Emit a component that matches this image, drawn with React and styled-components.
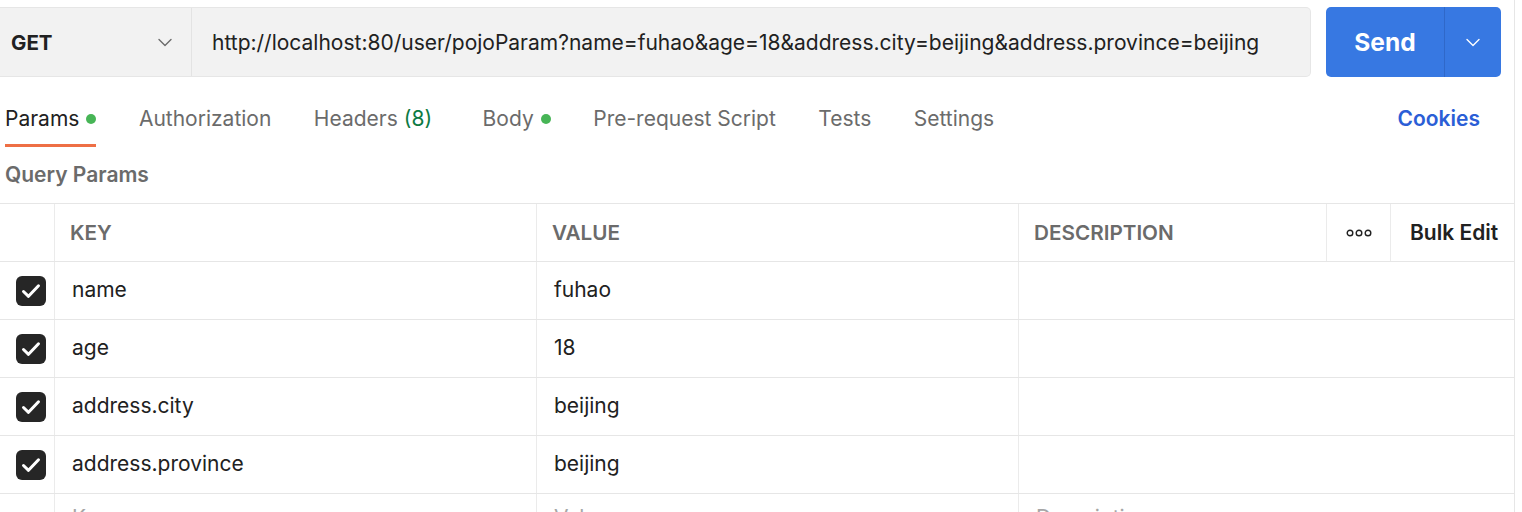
import React from "react";
import styled, { createGlobalStyle } from "styled-components";

const GlobalStyle = createGlobalStyle`
  body {
    margin: 0;
    background: #ffffff;
    font-family: Inter, "Noto Sans", sans-serif;
    color: #212121;
  }
`;

const params = [
  { key: "name", value: "fuhao" },
  { key: "age", value: "18" },
  { key: "address.city", value: "beijing" },
  { key: "address.province", value: "beijing" },
];

const tabs = [
  { label: "Params", dot: true, active: true },
  { label: "Authorization" },
  { label: "Headers", count: "(8)" },
  { label: "Body", dot: true },
  { label: "Pre-request Script" },
  { label: "Tests" },
  { label: "Settings" },
];

const Chevron = ({ color, size = 16 }) => (
  <svg width={size} height={size} viewBox="0 0 16 16" fill="none">
    <path d="M2 5.5l6 6 6-6" stroke={color} strokeWidth="1.4" strokeLinecap="round" strokeLinejoin="round" />
  </svg>
);

const CheckBox = () => (
  <Box>
    <svg width="24" height="24" viewBox="0 0 24 24" fill="none">
      <path d="M4.5 12.5l5 4.8L19.5 6.8" stroke="#fff" strokeWidth="3" strokeLinecap="round" strokeLinejoin="round" />
    </svg>
  </Box>
);

const App = () => {
  return (
    <Page>
      <GlobalStyle />
      <TopBar>
        <UrlGroup>
          <Method>
            <span>GET</span>
            <Chevron color="#6b6b6b" />
          </Method>
          <Url>http://localhost:80/user/pojoParam?name=fuhao&age=18&address.city=beijing&address.province=beijing</Url>
        </UrlGroup>
        <SendButton>
          <SendLabel>Send</SendLabel>
          <SendMenu>
            <Chevron color="#ffffff" />
          </SendMenu>
        </SendButton>
      </TopBar>

      <TabRow>
        <Tabs>
          {tabs.map((t) => (
            <Tab key={t.label} active={t.active}>
              {t.label}
              {t.count && <Count>{t.count}</Count>}
              {t.dot && <Dot />}
            </Tab>
          ))}
        </Tabs>
        <Cookies>Cookies</Cookies>
      </TabRow>

      <SectionTitle>Query Params</SectionTitle>

      <Table>
        <HeadRow>
          <CheckCell />
          <HeadCell>KEY</HeadCell>
          <HeadCell>VALUE</HeadCell>
          <HeadCell>DESCRIPTION</HeadCell>
          <MoreCell>
            <svg width="26" height="8" viewBox="0 0 26 8" fill="none">
              <circle cx="4" cy="4" r="2.8" stroke="#212121" strokeWidth="1.4" />
              <circle cx="13" cy="4" r="2.8" stroke="#212121" strokeWidth="1.4" />
              <circle cx="22" cy="4" r="2.8" stroke="#212121" strokeWidth="1.4" />
            </svg>
          </MoreCell>
          <BulkCell>Bulk Edit</BulkCell>
        </HeadRow>
        {params.map((p) => (
          <Row key={p.key}>
            <CheckCell>
              <CheckBox />
            </CheckCell>
            <Cell>{p.key}</Cell>
            <Cell>{p.value}</Cell>
            <Cell wide />
          </Row>
        ))}
        <Row>
          <CheckCell />
          <Cell placeholder>Key</Cell>
          <Cell placeholder>Value</Cell>
          <Cell wide placeholder>Description</Cell>
        </Row>
      </Table>
    </Page>
  );
};

const Page = styled.div`
  width: 1514px;
  height: 512px;
  overflow: hidden;
  border-right: 1px solid #e6e6e6;
`;

const TopBar = styled.div`
  display: flex;
  align-items: stretch;
  gap: 15px;
  padding-top: 7px;
  height: 70px;
`;

const UrlGroup = styled.div`
  width: 1310px;
  display: flex;
  background: #f2f2f2;
  border: 1px solid #e6e6e6;
  border-left: none;
  border-radius: 0 5px 5px 0;
`;

const Method = styled.div`
  width: 192px;
  box-sizing: border-box;
  display: flex;
  align-items: center;
  justify-content: space-between;
  padding: 0 18px 0 11px;
  border-right: 1px solid #e3e3e3;
  font-size: 20.5px;
  font-weight: 700;
  color: #212121;
`;

const Url = styled.div`
  display: flex;
  align-items: center;
  padding-left: 20px;
  font-size: 21px;
  color: #212121;
  white-space: nowrap;
`;

const SendButton = styled.div`
  width: 175px;
  display: flex;
  background: #3778e2;
  border-radius: 5px;
  color: #ffffff;
`;

const SendLabel = styled.div`
  flex: 1;
  display: flex;
  align-items: center;
  justify-content: center;
  font-size: 24.5px;
  font-weight: 700;
  border-right: 1px solid #2f68c9;
`;

const SendMenu = styled.div`
  width: 56px;
  display: flex;
  align-items: center;
  justify-content: center;
`;

const TabRow = styled.div`
  display: flex;
  align-items: flex-start;
  justify-content: space-between;
  height: 70px;
  padding: 0 34px 0 5px;
`;

const Tabs = styled.div`
  display: flex;
  gap: 42.5px;
  height: 100%;
`;

const Tab = styled.div`
  display: flex;
  align-items: center;
  gap: 7px;
  height: 100%;
  box-sizing: border-box;
  padding-top: 16px;
  font-size: 21px;
  color: ${(p) => (p.active ? "#212121" : "#6b6b6b")};
  border-bottom: 3px solid ${(p) => (p.active ? "#ee6f45" : "transparent")};
`;

const Count = styled.span`
  color: #0d7a43;
  margin-left: -1px;
  margin-right: 8px;
`;

const Dot = styled.span`
  width: 10px;
  height: 10px;
  border-radius: 50%;
  background: #47b556;
`;

const Cookies = styled.div`
  height: 100%;
  display: flex;
  align-items: center;
  padding-top: 13px;
  box-sizing: border-box;
  font-size: 21px;
  font-weight: 600;
  color: #2b5ed6;
`;

const SectionTitle = styled.div`
  height: 56px;
  box-sizing: border-box;
  padding: 0 0 2px 5px;
  display: flex;
  align-items: center;
  font-size: 21px;
  font-weight: 600;
  color: #6b6b6b;
`;

const Table = styled.div`
  border-top: 1px solid #e6e6e6;
`;

const HeadRow = styled.div`
  display: grid;
  grid-template-columns: 55px 482px 482px 308px 64px 1fr;
  height: 57px;
  border-bottom: 1px solid #e6e6e6;
`;

const Row = styled.div`
  display: grid;
  grid-template-columns: 55px 482px 482px 1fr;
  height: 57px;
  border-bottom: 1px solid #e6e6e6;
`;

const CheckCell = styled.div`
  display: flex;
  align-items: center;
  justify-content: center;
  padding-left: 7px;
  border-right: 1px solid #ebebeb;
`;

const HeadCell = styled.div`
  display: flex;
  align-items: center;
  padding-left: 15px;
  font-size: 20.7px;
  font-weight: 600;
  color: #6b6b6b;
  border-right: 1px solid #ebebeb;
`;

const MoreCell = styled.div`
  display: flex;
  align-items: center;
  justify-content: center;
  border-right: 1px solid #ebebeb;
`;

const BulkCell = styled.div`
  display: flex;
  align-items: center;
  padding-left: 19px;
  font-size: 21px;
  font-weight: 600;
  color: #212121;
  white-space: nowrap;
`;

const Cell = styled.div`
  display: flex;
  align-items: center;
  padding-left: 17px;
  padding-bottom: ${(p) => (p.placeholder ? "11px" : "2px")};
  font-size: 21px;
  color: ${(p) => (p.placeholder ? "#a6a6a6" : "#212121")};
  border-right: ${(p) => (p.wide ? "none" : "1px solid #ebebeb")};
`;

const Box = styled.div`
  width: 30px;
  height: 30px;
  border-radius: 6px;
  background: #262626;
  display: flex;
  align-items: center;
  justify-content: center;
`;

export default App;
